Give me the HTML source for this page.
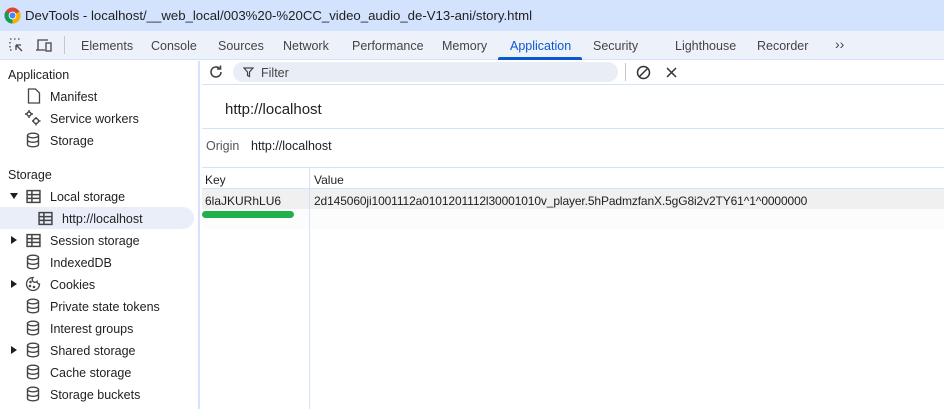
<!DOCTYPE html>
<html><head><meta charset="utf-8"><style>
*{margin:0;padding:0;box-sizing:border-box}
body{width:944px;height:409px;overflow:hidden;background:#fff;font-family:"Liberation Sans",sans-serif;font-size:12px;color:#1f1f1f;position:relative}
.abs{position:absolute;white-space:nowrap}
#title{left:0;top:0;width:944px;height:31px;background:#d3e3fd}
#tabs{left:0;top:31px;width:944px;height:29px;background:#edf2fa;border-bottom:1px solid #d3e3fd}
.tab{position:absolute;top:39px;font-size:12.5px;color:#444}
#side{left:0;top:61px;width:200px;height:348px;border-right:2px solid #d3e3fd}
.it{position:absolute;font-size:12.5px;color:#1f1f1f;margin-top:1px}
.ic{position:absolute}
</style></head><body>
<div class="abs" id="title"></div>
<svg class="abs" style="left:4px;top:7px" width="17" height="17" viewBox="0 0 16 16"><circle cx="8" cy="8" r="7.5" fill="#db4437"/><path d="M8 8 L1.5 11.75 A7.5 7.5 0 0 0 8 15.5 Z" fill="#0f9d58"/><path d="M8 8 L14.5 4.25 A7.5 7.5 0 0 1 8 15.5 L8 8Z" fill="#f4b400"/><path d="M8 8 L1.5 11.75 A7.5 7.5 0 0 1 1.5 4.25Z" fill="#0f9d58"/><circle cx="8" cy="8" r="3.6" fill="#fff"/><circle cx="8" cy="8" r="2.8" fill="#4285f4"/></svg>
<div class="abs" style="left:25px;top:8px;font-size:13.2px;color:#1f1f1f">DevTools - localhost/__web_local/003%20-%20CC_video_audio_de-V13-ani/story.html</div>
<div class="abs" id="tabs"></div>
<svg class="abs" style="left:9px;top:38px" width="16" height="16" viewBox="0 0 16 16" fill="none" stroke="#444" stroke-width="1.3"><path d="M1 1h2M5 1h2M9 1h2M1 4v2M1 8v2M1 12h2" stroke-dasharray="1.5 1"/><path d="M7 7l6 6M7 7v5M7 7h5"/></svg>
<svg class="abs" style="left:36px;top:38px" width="17" height="15" viewBox="0 0 17 15" fill="none" stroke="#444" stroke-width="1.3"><path d="M2 12V2h10M0 12h9"/><rect x="10" y="5" width="5" height="8"/></svg>
<div class="abs" style="left:64px;top:36px;width:1px;height:18px;background:#c7c7c7"></div>
<div class="tab" style="left:81px">Elements</div>
<div class="tab" style="left:151px">Console</div>
<div class="tab" style="left:218px">Sources</div>
<div class="tab" style="left:283px">Network</div>
<div class="tab" style="left:352px">Performance</div>
<div class="tab" style="left:442px">Memory</div>
<div class="tab" style="left:510px;color:#0b57d0">Application</div>
<div class="abs" style="left:498px;top:57px;width:84px;height:3px;background:#0b57d0;border-radius:2px 2px 0 0"></div>
<div class="tab" style="left:593px">Security</div>
<div class="tab" style="left:675px">Lighthouse</div>
<div class="tab" style="left:757px">Recorder</div>
<div class="tab" style="left:835px;font-size:14px;top:36px">&#8250;&#8250;</div>

<div class="abs" id="side"></div>
<div class="it" style="left:8px;top:67px">Application</div>
<svg class="ic" style="left:27px;top:88px" width="14" height="16" viewBox="0 0 14 16" fill="none" stroke="#444" stroke-width="1.3"><path d="M1.5 1h7l4 4v10h-11z"/></svg>
<div class="it" style="left:50px;top:89px">Manifest</div>
<svg class="ic" style="left:25px;top:110px" width="16" height="16" viewBox="0 0 16 16" fill="none" stroke="#444" stroke-width="1.4"><circle cx="4" cy="4" r="2"/><circle cx="11" cy="11" r="2.5"/><path d="M4 0v1.5M4 6.5V8M0 4h1.5M6.5 4H8M11 7v1M11 14v1.5M7 11h1M14 11h1.5"/></svg>
<div class="it" style="left:50px;top:111px">Service workers</div>
<div class="it" style="left:50px;top:133px">Storage</div>
<div class="it" style="left:8px;top:167px">Storage</div>
<div class="abs" style="left:0;top:207px;width:194px;height:22px;background:#e9eef9;border-radius:0 11px 11px 0"></div>
<div class="it" style="left:50px;top:189px">Local storage</div>
<div class="it" style="left:62px;top:211px">http://localhost</div>
<div class="it" style="left:50px;top:233px">Session storage</div>
<div class="it" style="left:50px;top:255px">IndexedDB</div>
<div class="it" style="left:50px;top:277px">Cookies</div>
<div class="it" style="left:50px;top:299px">Private state tokens</div>
<div class="it" style="left:50px;top:321px">Interest groups</div>
<div class="it" style="left:50px;top:343px">Shared storage</div>
<div class="it" style="left:50px;top:365px">Cache storage</div>
<div class="it" style="left:50px;top:387px">Storage buckets</div>
<div class="abs" style="left:10px;top:193px;width:0;height:0;border-left:4px solid transparent;border-right:4px solid transparent;border-top:6px solid #1f1f1f"></div>
<div class="abs" style="left:11px;top:236px;border-top:4px solid transparent;border-bottom:4px solid transparent;border-left:6px solid #1f1f1f"></div>
<div class="abs" style="left:11px;top:280px;border-top:4px solid transparent;border-bottom:4px solid transparent;border-left:6px solid #1f1f1f"></div>
<div class="abs" style="left:11px;top:346px;border-top:4px solid transparent;border-bottom:4px solid transparent;border-left:6px solid #1f1f1f"></div>
<svg width="0" height="0" style="position:absolute"><defs>
<symbol id="db" viewBox="0 0 14 16"><g fill="none" stroke="#444" stroke-width="1.4"><ellipse cx="7" cy="3.5" rx="5.5" ry="2.3"/><path d="M1.5 3.5v9c0 1.3 2.5 2.3 5.5 2.3s5.5-1 5.5-2.3v-9M1.5 8c0 1.3 2.5 2.3 5.5 2.3s5.5-1 5.5-2.3"/></g></symbol>
<symbol id="tb" viewBox="0 0 14 14"><g fill="none" stroke="#444" stroke-width="1.4"><rect x="1" y="1.5" width="12" height="11"/><path d="M1 5.2h12M1 8.8h12M5.5 1.5v11"/></g></symbol>
</defs></svg>
<svg class="ic" style="left:26px;top:132px" width="14" height="16"><use href="#db"/></svg>
<svg class="ic" style="left:26px;top:189px" width="15" height="15"><use href="#tb"/></svg>
<svg class="ic" style="left:38px;top:211px" width="15" height="15"><use href="#tb"/></svg>
<svg class="ic" style="left:26px;top:233px" width="15" height="15"><use href="#tb"/></svg>
<svg class="ic" style="left:26px;top:254px" width="14" height="16"><use href="#db"/></svg>
<svg class="ic" style="left:25px;top:276px" width="16" height="16" viewBox="0 0 16 16" fill="none" stroke="#444" stroke-width="1.3"><path d="M8 1.5a6.5 6.5 0 1 0 6.5 6.5 2.5 2.5 0 0 1-2.5-2.5A2.5 2.5 0 0 1 8 1.5z"/><circle cx="5.5" cy="6" r=".6" fill="#444"/><circle cx="5" cy="10" r=".6" fill="#444"/><circle cx="9" cy="11" r=".6" fill="#444"/></svg>
<svg class="ic" style="left:26px;top:298px" width="14" height="16"><use href="#db"/></svg>
<svg class="ic" style="left:26px;top:320px" width="14" height="16"><use href="#db"/></svg>
<svg class="ic" style="left:26px;top:342px" width="14" height="16"><use href="#db"/></svg>
<svg class="ic" style="left:26px;top:364px" width="14" height="16"><use href="#db"/></svg>
<svg class="ic" style="left:26px;top:386px" width="14" height="16"><use href="#db"/></svg>

<div class="abs" style="left:202px;top:84px;width:742px;height:1px;background:#d3e3fd"></div>
<svg class="abs" style="left:208px;top:64px" width="16" height="16" viewBox="0 0 16 16" fill="none" stroke="#444" stroke-width="1.6"><path d="M13 8a5 5 0 1 1-1.5-3.6"/><path d="M12.5 1.5v3.5H9" /></svg>
<div class="abs" style="left:233px;top:62px;width:385px;height:20px;background:#e9eef6;border-radius:10px"></div>
<svg class="abs" style="left:243px;top:67px" width="11" height="11" viewBox="0 0 11 11" fill="none" stroke="#444" stroke-width="1.2"><path d="M1 1h9L6.5 5v4.5L4.5 8.5V5z"/></svg>
<div class="abs" style="left:261px;top:66px;font-size:12.5px;color:#444">Filter</div>
<div class="abs" style="left:625px;top:63px;width:1px;height:18px;background:#c7c7c7"></div>
<svg class="abs" style="left:636px;top:65px" width="15" height="15" viewBox="0 0 15 15" fill="none" stroke="#333" stroke-width="1.5"><circle cx="7.5" cy="7.5" r="6"/><path d="M3.5 11.5l8-8"/></svg>
<svg class="abs" style="left:666px;top:67px" width="11" height="11" viewBox="0 0 11 11" stroke="#333" stroke-width="1.5"><path d="M1 1l9 9M10 1l-9 9"/></svg>
<div class="abs" style="left:225px;top:101px;font-size:15px;color:#1f1f1f">http://localhost</div>
<div class="abs" style="left:202px;top:128px;width:742px;height:1px;background:#d3e3fd"></div>
<div class="abs" style="left:206px;top:139px;color:#555;font-size:12.5px">Origin</div>
<div class="abs" style="left:251px;top:139px;font-size:12.5px">http://localhost</div>
<div class="abs" style="left:202px;top:167px;width:742px;height:1px;background:#d3e3fd"></div>
<div class="abs" style="left:202px;top:168px;width:742px;height:21px;border-bottom:1px solid #d3e3fd"></div>
<div class="abs" style="left:202px;top:189px;width:742px;height:20px;background:#f0f0f0"></div>
<div class="abs" style="left:202px;top:209px;width:742px;height:20px;background:#fcfcfd"></div>
<div class="abs" style="left:309px;top:168px;width:1px;height:241px;background:#d3e3fd"></div>
<div class="abs" style="left:205px;top:173px;font-size:12px">Key</div>
<div class="abs" style="left:314px;top:173px;font-size:12px">Value</div>
<div class="abs" style="left:205px;top:194px;font-size:12px">6laJKURhLU6</div>
<div class="abs" style="left:314px;top:194px;font-size:12px;letter-spacing:-0.12px">2d145060ji1001112a0101201112l30001010v_player.5hPadmzfanX.5gG8i2v2TY61^1^0000000</div>
<div class="abs" style="left:202px;top:211px;width:92px;height:7px;background:#22b04b;border-radius:4px"></div>
</body></html>
